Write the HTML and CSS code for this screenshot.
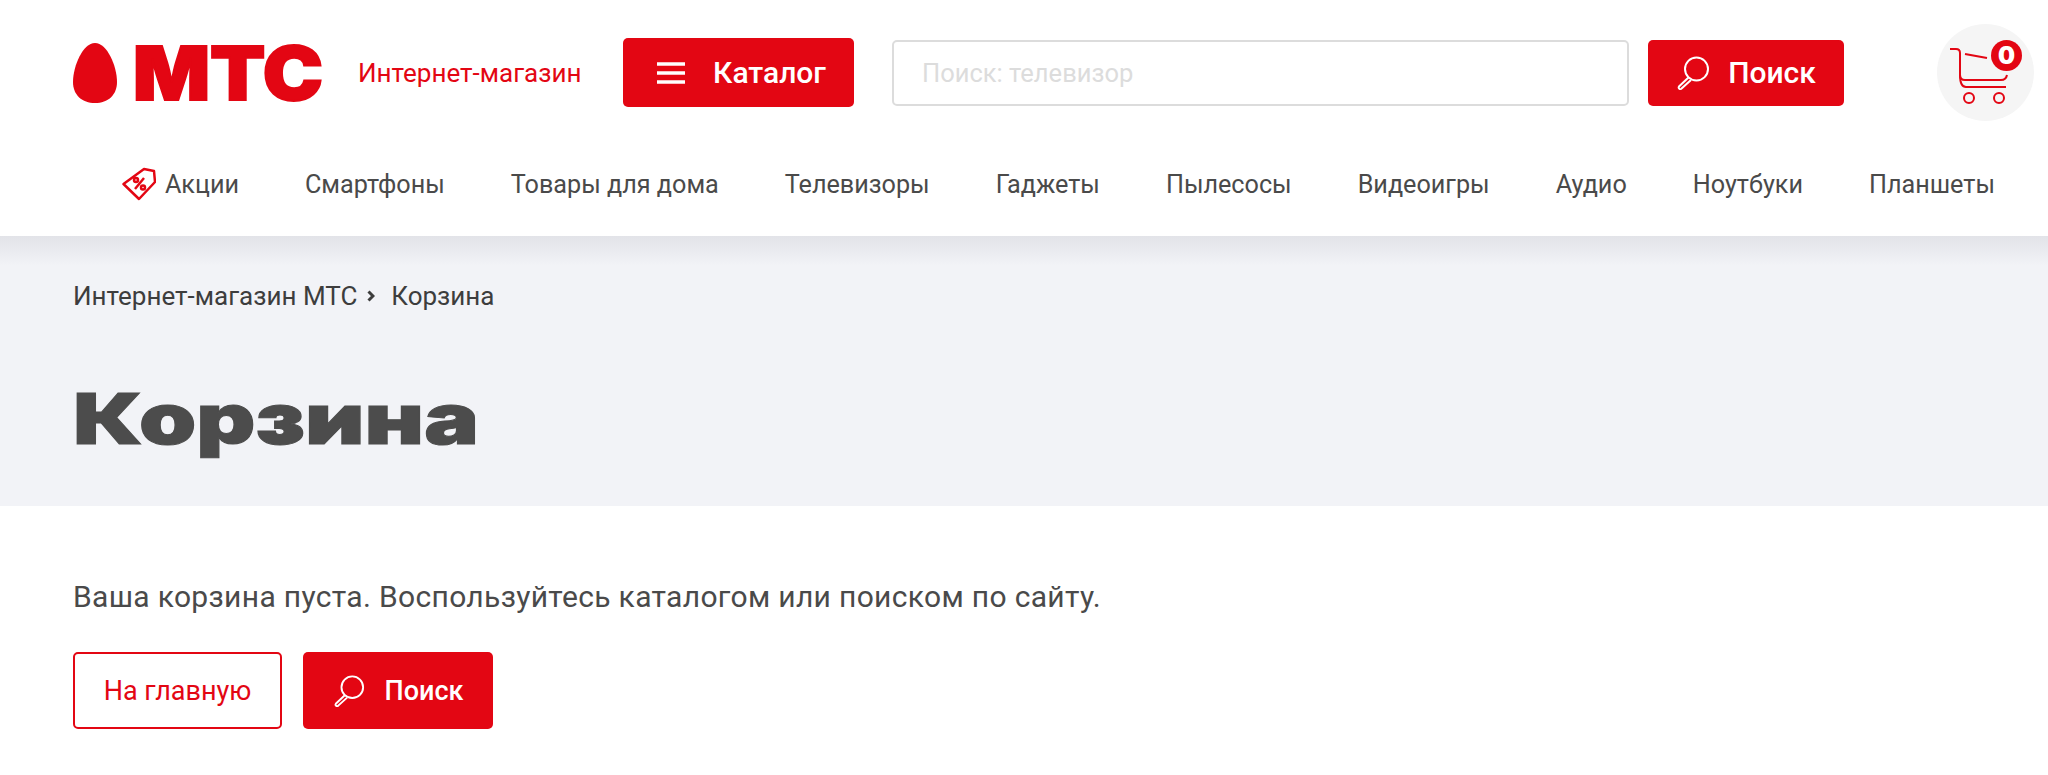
FILE: index.html
```html
<!DOCTYPE html>
<html lang="ru">
<head>
<meta charset="utf-8">
<title>Корзина</title>
<link rel="stylesheet" href="styles.css">
</head>
<body>
<header class="header">
  <div class="top-row">
    <a class="logo" href="#">
      <svg class="logo-mark" viewBox="0 0 250 60" width="250" height="60">
        <path class="logo-fill" d="M22 0C10 0 0 23 0 39C0 52 9 60 22 60C35 60 44 52 44 39C44 23 34 0 22 0Z"/>
        <text class="logo-word" x="60" y="57" textLength="190" lengthAdjust="spacingAndGlyphs">МТС</text>
      </svg>
    </a>
    <span class="shop-name">Интернет-магазин</span>
    <button class="btn btn-catalog">
      <svg class="burger" viewBox="0 0 28 22" width="28" height="22"><path d="M0 2H28M0 11H28M0 20H28"/></svg>
      Каталог
    </button>
    <div class="search-field">Поиск: телевизор</div>
    <button class="btn btn-search">
      <svg class="loupe" viewBox="0 0 34 34" width="34" height="34"><circle cx="20.5" cy="13" r="11.5"/><path d="M12.5 21.5L3 30.5a1.6 1.6 0 0 0 2.6 2L15 24"/></svg>
      Поиск
    </button>
    <a class="cart" href="#">
      <svg class="cart-icon" viewBox="0 0 58 56" width="58" height="56">
        <path d="M0 1H6Q10 1 10 5V27Q10 32 15 32H51Q56 32 57 27"/>
        <path d="M10 27Q10 39 16 39H56"/>
        <path d="M15 6L37 10"/>
        <circle cx="19" cy="50" r="5"/>
        <circle cx="49" cy="50" r="5"/>
      </svg>
      <span class="cart-count">0</span>
    </a>
  </div>
  <nav class="nav">
    <a class="nav-link nav-promo" href="#">
      <svg class="tag" viewBox="0 0 34 34" width="34" height="34">
        <path d="M1.500 17L22 2L32 4L33 15L17 32Z"/>
        <circle cx="14" cy="13" r="2"/><circle cx="21" cy="20.500" r="2"/><path d="M22 11L13 22"/>
      </svg>
      Акции
    </a>
    <a class="nav-link" href="#">Смартфоны</a>
    <a class="nav-link" href="#">Товары для дома</a>
    <a class="nav-link" href="#">Телевизоры</a>
    <a class="nav-link" href="#">Гаджеты</a>
    <a class="nav-link" href="#">Пылесосы</a>
    <a class="nav-link" href="#">Видеоигры</a>
    <a class="nav-link" href="#">Аудио</a>
    <a class="nav-link" href="#">Ноутбуки</a>
    <a class="nav-link" href="#">Планшеты</a>
  </nav>
</header>
<section class="band">
  <div class="crumbs">
    <a href="#">Интернет-магазин МТС</a>
    <svg class="crumb-sep" viewBox="0 0 8 12" width="8" height="12"><path d="M1.500 1.500L6 6L1.500 10.500"/></svg>
    <span>Корзина</span>
  </div>
  <h1 class="title">Корзина</h1>
</section>
<main class="content">
  <p class="empty">Ваша корзина пуста. Воспользуйтесь каталогом или поиском по сайту.</p>
  <div class="actions">
    <a class="btn btn-outline" href="#">На главную</a>
    <a class="btn btn-small" href="#">
      <svg class="loupe" viewBox="0 0 34 34" width="32" height="32"><circle cx="20.5" cy="13" r="11.5"/><path d="M12.5 21.5L3 30.5a1.6 1.6 0 0 0 2.6 2L15 24"/></svg>
      Поиск
    </a>
  </div>
</main>
</body>
</html>
```
FILE: styles.css
```css
* { box-sizing: border-box; }
html, body { margin: 0; padding: 0; background: #fff; }
body { font-family: Roboto, "Noto Sans", sans-serif; color: #4a4a4a; width: 2048px; height: 775px; overflow: hidden; }
a { text-decoration: none; color: inherit; }
button { font-family: inherit; border: 0; padding: 0; }

.header { background: #fff; height: 236px; padding-top: 24px; }
.top-row { display: flex; align-items: center; height: 97px; padding-left: 73px; }
.logo { display: block; width: 250px; height: 60px; }
.logo-mark { display: block; overflow: visible; }
.logo-fill { fill: #e30613; }
.logo-word { font-family: Inter, sans-serif; font-weight: 900; font-size: 74px; fill: #e30613; stroke: #e30613; stroke-width: 2px; }
.shop-name { margin-left: 35px; margin-right: 1px; width: 222px; font-size: 26px; color: #e30613; white-space: nowrap; }

.btn { display: flex; align-items: center; justify-content: center; border-radius: 5px; background: #e30613; color: #fff; }
.btn-catalog { margin-left: 42px; width: 231px; height: 69px; padding-left: 6px; font-size: 30px; font-weight: 500; gap: 28px; }
.burger { fill: none; stroke: #fff; stroke-width: 3.500px; }
.search-field { margin-left: 38px; width: 737px; height: 66px; border: 2px solid #dcdcdc; border-radius: 5px; padding-left: 28px; font-size: 25.500px; line-height: 62px; color: #dcdcdc; }
.btn-search { margin-left: 19px; width: 196px; height: 66px; font-size: 30px; font-weight: 500; gap: 18px; }
.loupe { fill: none; stroke: #fff; stroke-width: 2px; }

.cart { position: relative; display: flex; align-items: center; justify-content: center; margin-left: 93px; width: 97px; height: 97px; border-radius: 50%; background: #f5f5f5; }
.cart-icon { fill: none; stroke: #e30613; stroke-width: 2px; margin: 7px 13px 0 0; }
.cart-count { position: absolute; left: 54px; top: 16px; width: 31px; height: 31px; border-radius: 50%; background: #e30613; color: #fff; font-family: Inter, sans-serif; font-weight: 900; font-size: 24px; line-height: 31px; text-align: center; }

.nav { display: flex; justify-content: flex-end; align-items: center; gap: 66px; height: 115px; padding: 11px 53px 0 0; font-size: 25.200px; }
.nav-link { display: flex; align-items: center; gap: 9px; white-space: nowrap; }
.tag { fill: none; stroke: #e30613; stroke-width: 2.500px; stroke-linejoin: round; }

.band { height: 270px; padding: 45px 73px 0; background: linear-gradient(#e2e3e8 0, #f2f3f7 30px); }
.crumbs { display: flex; align-items: center; gap: 10px; font-size: 26px; color: #3d3d3d; line-height: 30px; }
.crumb-sep { fill: none; stroke: #3d3d3d; stroke-width: 3px; margin-right: 6px; }
.title { width: fit-content; margin: 68px 0 0; font-family: Inter, sans-serif; font-weight: 900; font-size: 70px; line-height: 80px; color: #4c4c4c; -webkit-text-stroke: 1px #4c4c4c; transform: scaleX(1.31); transform-origin: left center; }

.content { padding: 73px 73px 0; }
.empty { margin: 0; font-size: 30px; line-height: 36px; letter-spacing: .33px; color: #4a4a4a; }
.actions { display: flex; gap: 21px; margin-top: 37px; }
.btn-outline { width: 209px; height: 77px; background: #fff; border: 2px solid #e30613; color: #e30613; font-size: 27px; }
.btn-small { width: 190px; height: 77px; font-size: 27px; font-weight: 500; gap: 20px; }
```
